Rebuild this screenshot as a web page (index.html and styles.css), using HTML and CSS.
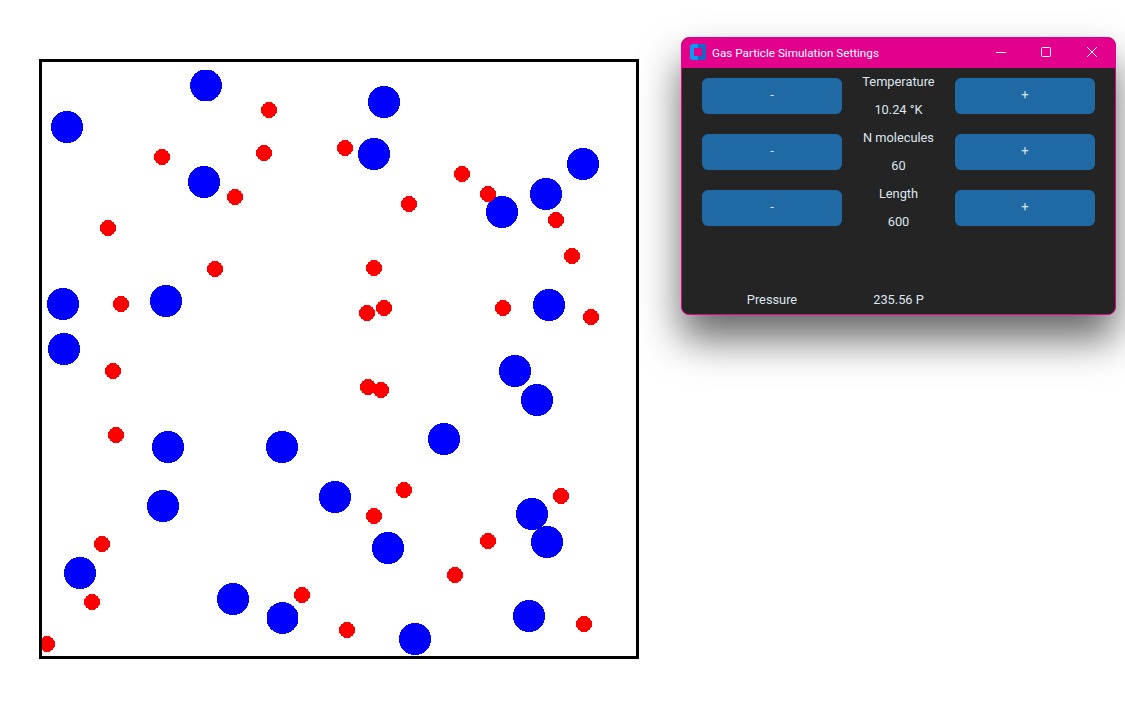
FILE: index.html
```html
<!DOCTYPE html>
<html>
<head>
    <title>Gas Particle Simulation</title>
    <link rel="stylesheet" href="styles.css">
</head>
<body>
    <svg class="arena" width="600" height="600" viewBox="39 59 600 600">
        <g class="blue">
            <circle cx="206" cy="85.5" r="16"/>
            <circle cx="384" cy="102" r="16"/>
            <circle cx="67" cy="127" r="16"/>
            <circle cx="374" cy="154" r="16"/>
            <circle cx="204" cy="182" r="16"/>
            <circle cx="583" cy="164" r="16"/>
            <circle cx="546" cy="194" r="16"/>
            <circle cx="502" cy="212" r="16"/>
            <circle cx="63" cy="304" r="16"/>
            <circle cx="166" cy="301" r="16"/>
            <circle cx="549" cy="305" r="16"/>
            <circle cx="64" cy="349" r="16"/>
            <circle cx="515" cy="371" r="16"/>
            <circle cx="537" cy="400" r="16"/>
            <circle cx="168" cy="447" r="16"/>
            <circle cx="282" cy="447" r="16"/>
            <circle cx="444" cy="439" r="16"/>
            <circle cx="335" cy="497" r="16"/>
            <circle cx="163" cy="506" r="16"/>
            <circle cx="532" cy="514" r="16"/>
            <circle cx="547" cy="542" r="16"/>
            <circle cx="388" cy="548" r="16"/>
            <circle cx="80" cy="573" r="16"/>
            <circle cx="233" cy="599" r="16"/>
            <circle cx="282.5" cy="618" r="16"/>
            <circle cx="529" cy="616" r="16"/>
            <circle cx="415" cy="639" r="16"/>
        </g>
        <g class="red">
            <circle cx="269" cy="110" r="8"/>
            <circle cx="162" cy="157" r="8"/>
            <circle cx="264" cy="153" r="8"/>
            <circle cx="345" cy="148" r="8"/>
            <circle cx="462" cy="174" r="8"/>
            <circle cx="488" cy="194" r="8"/>
            <circle cx="235" cy="197" r="8"/>
            <circle cx="409" cy="204" r="8"/>
            <circle cx="556" cy="220" r="8"/>
            <circle cx="108" cy="228" r="8"/>
            <circle cx="572" cy="256" r="8"/>
            <circle cx="215" cy="269" r="8"/>
            <circle cx="374" cy="268" r="8"/>
            <circle cx="121" cy="304" r="8"/>
            <circle cx="384" cy="308" r="8"/>
            <circle cx="367" cy="313" r="8"/>
            <circle cx="503" cy="308" r="8"/>
            <circle cx="591" cy="317" r="8"/>
            <circle cx="113" cy="371" r="8"/>
            <circle cx="368" cy="387" r="8"/>
            <circle cx="381" cy="390" r="8"/>
            <circle cx="116" cy="435" r="8"/>
            <circle cx="404" cy="490" r="8"/>
            <circle cx="561" cy="496" r="8"/>
            <circle cx="374" cy="516" r="8"/>
            <circle cx="102" cy="544" r="8"/>
            <circle cx="488" cy="541" r="8"/>
            <circle cx="455" cy="575" r="8"/>
            <circle cx="92" cy="602" r="8"/>
            <circle cx="302" cy="595" r="8"/>
            <circle cx="347" cy="630" r="8"/>
            <circle cx="584" cy="624" r="8"/>
            <circle cx="47" cy="644" r="8"/>
        </g>
        <rect class="wall" x="40.5" y="60.5" width="597" height="597"/>
    </svg>

    <div class="window">
        <div class="titlebar">
            <svg class="app-icon" width="16" height="16" viewBox="0 0 16 16">
                <rect width="16" height="16" rx="3" fill="#0a9cf5"/>
                <path d="M16 3v10a3 3 0 0 1-3 3H8v-4h4V4H8V0h5a3 3 0 0 1 3 3z" fill="#1668c4"/>
                <rect x="4" y="4" width="8" height="8" rx="1" fill="#e3008c"/>
            </svg>
            <span class="title">Gas Particle Simulation Settings</span>
            <div class="controls">
                <svg width="46" height="30" viewBox="0 0 46 30"><path d="M19 14.5h10" stroke="#fff"/></svg>
                <svg width="46" height="30" viewBox="0 0 46 30"><rect x="18.5" y="9.5" width="9" height="9" rx="1" fill="none" stroke="#fff"/></svg>
                <svg width="46" height="30" viewBox="0 0 46 30"><path d="M18 9l10 10M28 9L18 19" stroke="#fff"/></svg>
            </div>
        </div>
        <div class="settings">
            <button>-</button>
            <div class="readout"><span>Temperature</span><span>10.24 °K</span></div>
            <button>+</button>
            <button>-</button>
            <div class="readout"><span>N molecules</span><span>60</span></div>
            <button>+</button>
            <button>-</button>
            <div class="readout"><span>Length</span><span>600</span></div>
            <button>+</button>
        </div>
        <div class="pressure">
            <span>Pressure</span>
            <span>235.56 P</span>
        </div>
    </div>
</body>
</html>
```

FILE: styles.css
```css
html, body {
    height: 100%;
    overflow: hidden;
}
body {
    margin: 0;
    background-color: #fff;
    font-family: Roboto, "Liberation Sans", sans-serif;
}
.arena {
    display: block;
    margin: 59px 0 0 39px;
    shape-rendering: crispEdges;
}
.blue {
    fill: #0000ff;
}
.red {
    fill: #ff0000;
}
.wall {
    fill: none;
    stroke: #000;
    stroke-width: 3;
}
.window {
    position: absolute;
    left: 681px;
    top: 37px;
    width: 435px;
    height: 278px;
    box-sizing: border-box;
    background-color: #242424;
    border: 1px solid #e3008c;
    border-radius: 8px;
    box-shadow: 0 24px 40px rgba(0, 0, 0, 0.6);
    color: #dce4ee;
    font-size: 12.8px;
}
.titlebar {
    display: flex;
    align-items: center;
    height: 30px;
    background-color: #e3008c;
    border-radius: 7px 7px 0 0;
    color: #fff;
    font-size: 11.7px;
    padding-left: 8px;
}
.app-icon {
    margin: 0 6px 2px 0;
}
.title {
    flex: 1;
}
.controls {
    display: flex;
}
.controls svg {
    display: block;
}
.settings {
    display: grid;
    grid-template-columns: 140px 113px 140px;
    grid-auto-rows: 56px;
    align-items: center;
    padding-left: 20px;
}
.settings button {
    height: 36px;
    padding: 0 0 4px;
    border: none;
    border-radius: 6px;
    background-color: #1f6aa5;
    color: #dce4ee;
    font-family: inherit;
    font-size: 13px;
}
.readout {
    display: grid;
    grid-auto-rows: 28px;
    line-height: 28px;
    text-align: center;
}
.pressure {
    display: grid;
    grid-template-columns: 140px 113px;
    margin-top: 50px;
    padding-left: 20px;
    line-height: 28px;
    text-align: center;
}
```
